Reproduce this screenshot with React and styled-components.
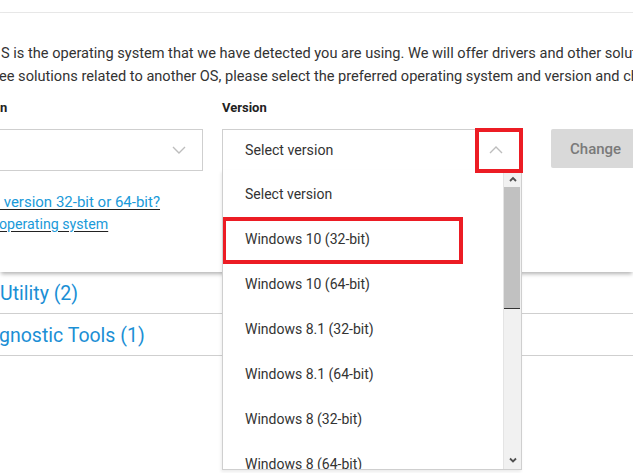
import React from "react";
import styled, { createGlobalStyle } from "styled-components";

const GlobalStyle = createGlobalStyle`
  html, body {
    margin: 0;
    padding: 0;
    background: #fff;
  }
  body {
    font-family: Roboto, "Liberation Sans", Arial, sans-serif;
    color: #333;
  }
`;

const Page = styled.div`
  position: relative;
  width: 633px;
  height: 473px;
  overflow: hidden;
  background: #fff;
`;

const TopRule = styled.div`
  height: 12px;
  border-bottom: 1px solid #e8e8e8;
`;

const Panel = styled.section`
  position: relative;
  z-index: 1;
  padding: 29px 0 37px;
  background: #fff;
  box-shadow: 0 3px 4px -1px rgba(0, 0, 0, 0.3);
`;

const Intro = styled.p`
  margin: 0;
  font-size: 14.6px;
  line-height: 23px;
  white-space: nowrap;
  color: #333;
`;

const IntroLine = styled.span`
  display: block;
  margin-left: ${(p) => p.$shift || 0}px;
`;

const Selectors = styled.div`
  display: grid;
  grid-template-columns: 203px 300px 1fr;
  grid-template-rows: 18px 42px;
  column-gap: 19px;
  row-gap: 12px;
  margin-top: 11px;
`;

const Label = styled.div`
  font-size: 13px;
  font-weight: 700;
  line-height: 18px;
  color: #222;
`;

const SelectBox = styled.div`
  position: relative;
  box-sizing: border-box;
  height: 42px;
  display: flex;
  align-items: center;
  justify-content: space-between;
  padding: 0 ${(p) => p.$padRight}px 0 22px;
  border: 1px solid #cfcfcf;
  ${(p) => p.$noLeft && "border-left: none;"}
  font-size: 14.2px;
  color: #333;
`;

const Chevron = styled.svg`
  width: 14px;
  height: 8px;
  flex: none;
`;

const Callout = styled.div`
  position: absolute;
  box-sizing: border-box;
  border: 4px solid #ec1c24;
  pointer-events: none;
  z-index: 3;
`;

const ChevronCallout = styled(Callout)`
  left: 252px;
  top: -2px;
  width: 48px;
  height: 45px;
`;

const OptionCallout = styled(Callout)`
  left: -1px;
  top: 1px;
  width: 241px;
  height: 47px;
`;

const Dropdown = styled.div`
  position: absolute;
  top: 100%;
  left: -1px;
  width: 300px;
  height: 300px;
  box-sizing: border-box;
  border: 1px solid #cfcfcf;
  border-top: none;
  background: #fff;
  box-shadow: -1px 2px 3px rgba(0, 0, 0, 0.08);
  overflow: hidden;
  z-index: 2;
`;

const Option = styled.div`
  position: relative;
  height: 45px;
  display: flex;
  align-items: center;
  padding-left: 22px;
  font-size: 14px;
  color: #333;
  white-space: nowrap;
  &:first-child {
    padding-top: 1px;
  }
`;

const Scrollbar = styled.div`
  position: absolute;
  top: 0;
  right: 0;
  bottom: 0;
  width: 17px;
  display: flex;
  flex-direction: column;
  background: #f1f1f1;
  border-left: 1px solid #e4e4e4;
`;

const ScrollArrow = styled.div`
  height: 17px;
  display: flex;
  align-items: center;
  justify-content: center;
  flex: none;
`;

const Thumb = styled.div`
  height: 121px;
  margin: 0 1px 0 0;
  background: #c1c1c1;
  border-bottom: 1px solid #333;
  flex: none;
`;

const Track = styled.div`
  flex: 1;
  display: flex;
  flex-direction: column;
  justify-content: flex-end;
  padding-bottom: 1px;
`;

const ChangeButton = styled.button`
  align-self: start;
  justify-self: start;
  margin-left: 10px;
  width: 110px;
  height: 39px;
  padding: 0 0 0 19px;
  text-align: left;
  border: none;
  border-radius: 2px;
  background: #d9d9d9;
  color: #7a7a7a;
  font-family: inherit;
  font-size: 15px;
  font-weight: 500;
`;

const Links = styled.div`
  margin-top: 20px;
  display: flex;
  flex-direction: column;
`;

const HelpLink = styled.a`
  align-self: flex-start;
  margin-left: ${(p) => p.$shift || 0}px;
  font-size: ${(p) => p.$size || 15}px;
  line-height: 22px;
  color: #1a9ad9;
  text-decoration: underline;
  text-decoration-color: #222;
  text-underline-offset: 2px;
  white-space: nowrap;
`;

const Category = styled.div`
  height: 41px;
  display: flex;
  align-items: center;
  border-bottom: 1px solid #cfcfcf;
  font-size: 19.5px;
  color: #1b8fd5;
  white-space: nowrap;
  padding-top: 1px;
  box-sizing: border-box;
  height: 42px;
  margin-left: ${(p) => p.$shift || 0}px;
`;

const ChevronIcon = ({ up }) => (
  <Chevron viewBox="0 0 14 8">
    <polyline
      points={up ? "1,7 7,1 13,7" : "1,1 7,7 13,1"}
      fill="none"
      stroke="#bdbdbd"
      strokeWidth="1.4"
    />
  </Chevron>
);

const Caret = ({ up }) => (
  <svg width="8" height="6" viewBox="0 0 8 6">
    <polyline
      points={up ? "1,5 4,2 7,5" : "1,1.5 4,4.5 7,1.5"}
      fill="none"
      stroke="#505050"
      strokeWidth="1.8"
    />
  </svg>
);

const versions = [
  "Select version",
  "Windows 10 (32-bit)",
  "Windows 10 (64-bit)",
  "Windows 8.1 (32-bit)",
  "Windows 8.1 (64-bit)",
  "Windows 8 (32-bit)",
  "Windows 8 (64-bit)",
];

const App = () => {
  return (
    <Page>
      <GlobalStyle />
      <TopRule />
      <Panel>
        <Intro>
          <IntroLine $shift={1}>
            S is the operating system that we have detected you are using. We will offer drivers and other soluti
          </IntroLine>
          <IntroLine $shift={-1}>
            ee solutions related to another OS, please select the preferred operating system and version and ch
          </IntroLine>
        </Intro>

        <Selectors>
          <Label>n</Label>
          <Label>Version</Label>
          <div />

          <SelectBox $noLeft $padRight={16}>
            <span />
            <ChevronIcon />
          </SelectBox>

          <SelectBox $padRight={18}>
            <span>Select version</span>
            <ChevronIcon up />
            <ChevronCallout />
            <Dropdown>
              {versions.map((v, i) => (
                <Option key={v}>
                  {v}
                  {i === 1 && <OptionCallout />}
                </Option>
              ))}
              <Scrollbar>
                <ScrollArrow>
                  <Caret up />
                </ScrollArrow>
                <Thumb />
                <Track>
                  <ScrollArrow>
                    <Caret />
                  </ScrollArrow>
                </Track>
              </Scrollbar>
            </Dropdown>
          </SelectBox>

          <ChangeButton>Change</ChangeButton>
        </Selectors>

        <Links>
          <HelpLink href="#">{"\u00a0version 32-bit or 64-bit?"}</HelpLink>
          <HelpLink href="#" $shift={-1} $size={14.2}>operating system</HelpLink>
        </Links>
      </Panel>

      <Category>Utility (2)</Category>
      <Category $shift={-1}>gnostic Tools (1)</Category>
    </Page>
  );
};

export default App;
